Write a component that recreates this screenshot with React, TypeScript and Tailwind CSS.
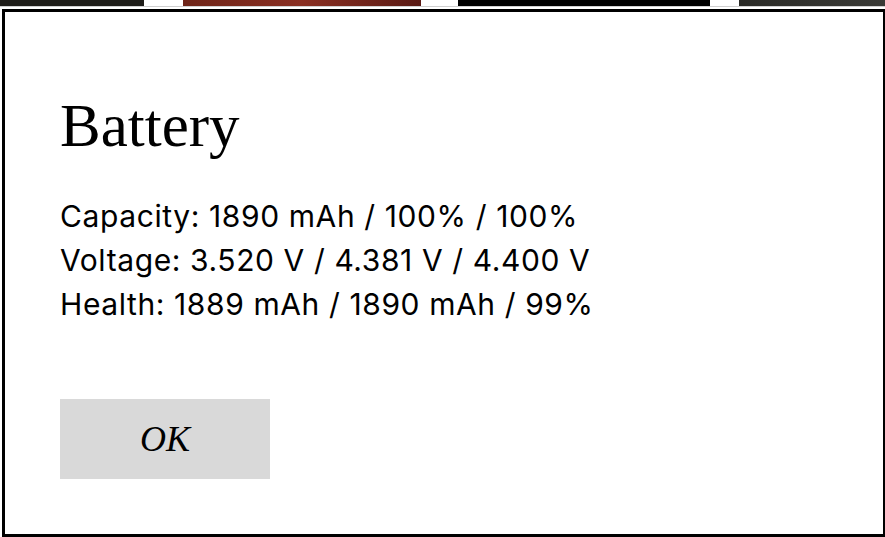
export default function App() {
  return (
    <div className="w-[885px] h-[537px] overflow-hidden bg-white relative">
      <div className="flex h-[7px] border-b border-[#cfcfcf]">
        <div className="w-[144px] bg-[#1e1d19]" />
        <div className="w-[39px] bg-white" />
        <div className="w-[238px] bg-gradient-to-r from-[#6e2418] via-[#8a2f22] to-[#5a1a14]" />
        <div className="w-[37px] bg-white" />
        <div className="w-[252px] bg-black" />
        <div className="w-[29px] bg-white" />
        <div className="flex-1 bg-gradient-to-r from-[#2a2a26] to-[#3a3a36]" />
      </div>
      <div className="ml-[2px] mt-[2px] w-[884px] h-[528px] border-[3px] border-black bg-white pl-[55px] pt-[84px]">
        <h1 className="font-['Liberation_Serif',serif] text-[61px] leading-[60px] text-black">
          Battery
        </h1>
        <div className="mt-[38px] font-['Inter',sans-serif] text-[30px] leading-[44px] tracking-[0.02em] text-black">
          <p>Capacity: 1890 mAh / 100% / 100%</p>
          <p>Voltage: 3.520 V / 4.381 V / 4.400 V</p>
          <p>Health: 1889 mAh / 1890 mAh / 99%</p>
        </div>
        <button className="mt-[73px] w-[210px] h-[80px] bg-[#d9d9d9] font-['Liberation_Serif',serif] italic text-[36px] text-black">
          OK
        </button>
      </div>
    </div>
  );
}
